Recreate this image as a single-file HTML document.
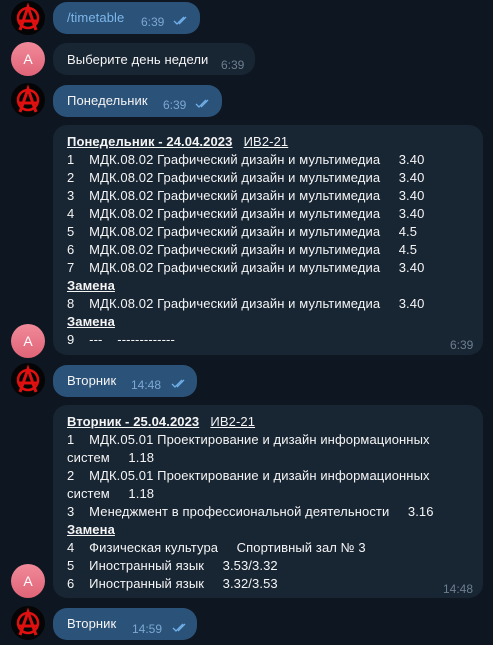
<!DOCTYPE html><html><head><meta charset="utf-8"><style>
body{margin:0;width:493px;height:645px;background:#0e1621;position:relative;overflow:hidden;font-family:"Liberation Sans","DejaVu Sans",sans-serif;font-size:13px;color:#f5f5f5}
.b{position:absolute;border-radius:14px}
.o{background:#2b5278;left:53px}
.i{background:#182533;left:53px}
.t{position:absolute;font-size:12px;color:#7da8d3}
.ti{position:absolute;font-size:12px;color:#6d7f8f}
.l{position:absolute;left:67px;white-space:pre;line-height:18px;letter-spacing:0.1px}
.u{text-decoration:underline;font-weight:bold}
.av{position:absolute;left:11px;width:34px;height:34px;border-radius:50%;overflow:visible}
.pk{background:linear-gradient(#f08a9a,#e06478);color:#fff;text-align:center;line-height:34px;font-size:14px}
.ck{position:absolute}
</style></head><body>
<svg width="0" height="0" style="position:absolute"><defs>
<g id="an"><circle cx="17" cy="17" r="17" fill="#050505"/><circle cx="17" cy="17" r="10" fill="none" stroke="#e01010" stroke-width="2.5"/><path d="M9 29 L17 6 L25 29 M8 20 H27" fill="none" stroke="#e01010" stroke-width="3"/></g>
<g id="ck"><path d="M1 6 l3 3 l7 -7 M6 9 l7 -7" fill="none" stroke="#6fb0ec" stroke-width="1.3"/></g>
</defs></svg>

<svg class="av" style="top:1px" viewBox="0 0 34 34"><use href="#an"/></svg>
<div class="b o" style="top:2px;width:147px;height:32px"></div>
<div class="l" style="top:9px;color:#7cb6ea">/timetable</div>
<div class="t" style="left:141px;top:15px">6:39</div>
<svg class="ck" style="left:173px;top:15px" width="16" height="12"><use href="#ck"/></svg>

<div class="av pk" style="top:42px">A</div>
<div class="b i" style="top:43px;width:202px;height:32px"></div>
<div class="l" style="top:51px">Выберите день недели</div>
<div class="ti" style="left:221px;top:58px">6:39</div>

<svg class="av" style="top:83px" viewBox="0 0 34 34"><use href="#an"/></svg>
<div class="b o" style="top:85px;width:169px;height:32px"></div>
<div class="l" style="top:92px">Понедельник</div>
<div class="t" style="left:163px;top:98px">6:39</div>
<svg class="ck" style="left:195px;top:98px" width="16" height="12"><use href="#ck"/></svg>

<div class="av pk" style="top:324px">A</div>
<div class="b i" style="top:125px;width:430px;height:230px"></div>
<div class="l" style="top:133px"><span class="u">Понедельник - 24.04.2023</span>   <span style="text-decoration:underline">ИВ2-21</span>
1    МДК.08.02 Графический дизайн и мультимедиа     3.40
2    МДК.08.02 Графический дизайн и мультимедиа     3.40
3    МДК.08.02 Графический дизайн и мультимедиа     3.40
4    МДК.08.02 Графический дизайн и мультимедиа     3.40
5    МДК.08.02 Графический дизайн и мультимедиа     4.5
6    МДК.08.02 Графический дизайн и мультимедиа     4.5
7    МДК.08.02 Графический дизайн и мультимедиа     3.40
<span class="u">Замена</span>
8    МДК.08.02 Графический дизайн и мультимедиа     3.40
<span class="u">Замена</span>
9    ---    -------------</div>
<div class="ti" style="left:450px;top:338px">6:39</div>

<svg class="av" style="top:363px" viewBox="0 0 34 34"><use href="#an"/></svg>
<div class="b o" style="top:365px;width:144px;height:32px"></div>
<div class="l" style="top:372px">Вторник</div>
<div class="t" style="left:131px;top:378px">14:48</div>
<svg class="ck" style="left:171px;top:378px" width="16" height="12"><use href="#ck"/></svg>

<div class="av pk" style="top:564px">A</div>
<div class="b i" style="top:405px;width:430px;height:193px"></div>
<div class="l" style="top:413px"><span class="u">Вторник - 25.04.2023</span>   <span style="text-decoration:underline">ИВ2-21</span>
1    МДК.05.01 Проектирование и дизайн информационных
систем     1.18
2    МДК.05.01 Проектирование и дизайн информационных
систем     1.18
3    Менеджмент в профессиональной деятельности     3.16
<span class="u">Замена</span>
4    Физическая культура     Спортивный зал № 3
5    Иностранный язык     3.53/3.32
6    Иностранный язык     3.32/3.53</div>
<div class="ti" style="left:443px;top:582px">14:48</div>

<svg class="av" style="top:606px" viewBox="0 0 34 34"><use href="#an"/></svg>
<div class="b o" style="top:608px;width:144px;height:32px"></div>
<div class="l" style="top:615px">Вторник</div>
<div class="t" style="left:132px;top:622px">14:59</div>
<svg class="ck" style="left:172px;top:622px" width="16" height="12"><use href="#ck"/></svg>
</body></html>
